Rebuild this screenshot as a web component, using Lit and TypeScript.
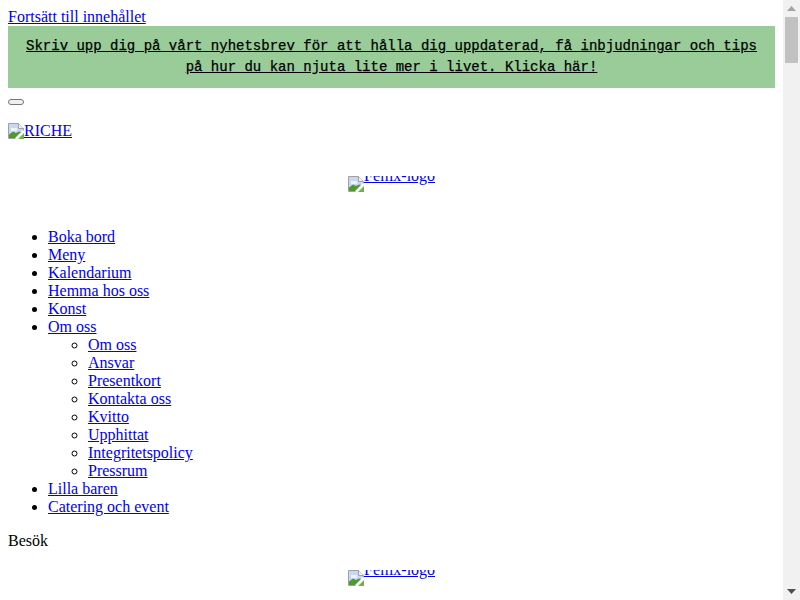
import { LitElement, html, css, svg } from "lit";
import { customElement } from "lit/decorators.js";

const brokenIcon = svg`<svg class="bi" width="16" height="16" viewBox="0 0 16 16" aria-hidden="true">
  <path d="M.5.5H10.5L15.5 5.5V15.5H.5Z" fill="#fff" stroke="#a0a0a0"/>
  <path d="M10.5.5V5.5H15.5" fill="#f2f2f2" stroke="#a0a0a0"/>
  <path d="M1 1H10V6H15V7L7 15H1Z" fill="#c9d8f2"/>
  <path d="M3 5H9V8H3Z" fill="#eef3fb"/>
  <path d="M1 15V11.5L5 8.5L8 10L11 8.5L13 9L7 15Z" fill="#4f9a2e"/>
  <path d="M9 16L16 9V16Z" fill="#6fb048"/>
  <path d="M7 16L16 7V10L10 16Z" fill="#fff"/>
</svg>`;

const top = ["Boka bord", "Meny", "Kalendarium", "Hemma hos oss", "Konst"];
const sub = ["Om oss", "Ansvar", "Presentkort", "Kontakta oss", "Kvitto", "Upphittat", "Integritetspolicy", "Pressrum"];
const rest = ["Lilla baren", "Catering och event"];

@customElement("app-root")
export class AppRoot extends LitElement {
  static styles = css`
    :host {
      display: flex;
      height: 600px;
      overflow: hidden;
      font-family: "Liberation Serif", serif;
      font-size: 16px;
      line-height: 18px;
      color: #000;
      background: #fff;
    }
    .page { flex: 1; min-width: 0; padding: 8px; overflow: hidden; }
    a { color: #0000ee; text-decoration: underline; }
    .banner {
      background: #99cc99;
      padding: 10px 15px;
      text-align: center;
      font-family: "Liberation Mono", monospace;
      font-size: 14px;
      line-height: 21px;
      color: #000;
      -webkit-text-stroke: 0.25px #000;
    }
    .banner a { color: #000; }
    .btn-row { margin: 11px 0 0; height: 6px; display: flex; }
    .btn {
      width: 16px;
      height: 6px;
      padding: 0;
      box-sizing: border-box;
      border: 1px solid #767676;
      border-radius: 3px;
      background: #efefef;
    }
    .brand { margin: 17px 0 0; height: 18px; }
    .brand a { display: inline-flex; align-items: center; }
    .logo { display: flex; justify-content: center; }
    .logo.first { margin-top: 36px; }
    .logo.second { margin-top: 20px; }
    .logo a { display: flex; width: 87px; height: 16px; overflow: hidden; }
    .logo span { margin-top: -9px; white-space: nowrap; }
    .bi { flex: none; display: block; }
    ul { margin: 0; padding-left: 40px; }
    .nav { margin-top: 36px; }
    .nav ul { list-style: circle; }
    .nav > ul { list-style: disc; }
    .visit { margin: 16px 0 0; }
    .scrollbar {
      flex: none;
      width: 17px;
      box-sizing: border-box;
      padding: 0 2px;
      background: #f1f1f1;
      display: flex;
      flex-direction: column;
    }
    .arrow { height: 17px; flex: none; display: flex; align-items: center; justify-content: center; }
    .thumb { height: 46px; flex: none; background: #c1c1c1; }
    .space { flex: 1; }
  `;

  render() {
    return html`
      <div class="page">
        <a href="#">Fortsätt till innehållet</a>
        <div class="banner"><a href="#">Skriv upp dig på vårt nyhetsbrev för att hålla dig uppdaterad, få inbjudningar och tips på hur du kan njuta lite mer i livet. Klicka här!</a></div>
        <div class="btn-row"><button class="btn" aria-label="Stäng"></button></div>
        <div class="brand"><a href="#">${brokenIcon}RICHE</a></div>
        <div class="logo first"><a href="#">${brokenIcon}<span>Fellix-logo</span></a></div>
        <nav class="nav">
          <ul>
            ${top.map((t) => html`<li><a href="#">${t}</a></li>`)}
            <li><a href="#">Om oss</a>
              <ul>${sub.map((t) => html`<li><a href="#">${t}</a></li>`)}</ul>
            </li>
            ${rest.map((t) => html`<li><a href="#">${t}</a></li>`)}
          </ul>
        </nav>
        <p class="visit">Besök</p>
        <div class="logo second"><a href="#">${brokenIcon}<span>Fellix-logo</span></a></div>
      </div>
      <div class="scrollbar" aria-hidden="true">
        <div class="arrow"><svg width="9" height="5" viewBox="0 0 9 5"><path d="M4.5 0L9 5H0Z" fill="#a3a3a3"/></svg></div>
        <div class="thumb"></div>
        <div class="space"></div>
        <div class="arrow"><svg width="9" height="5" viewBox="0 0 9 5"><path d="M0 0H9L4.5 5Z" fill="#505050"/></svg></div>
      </div>
    `;
  }
}
